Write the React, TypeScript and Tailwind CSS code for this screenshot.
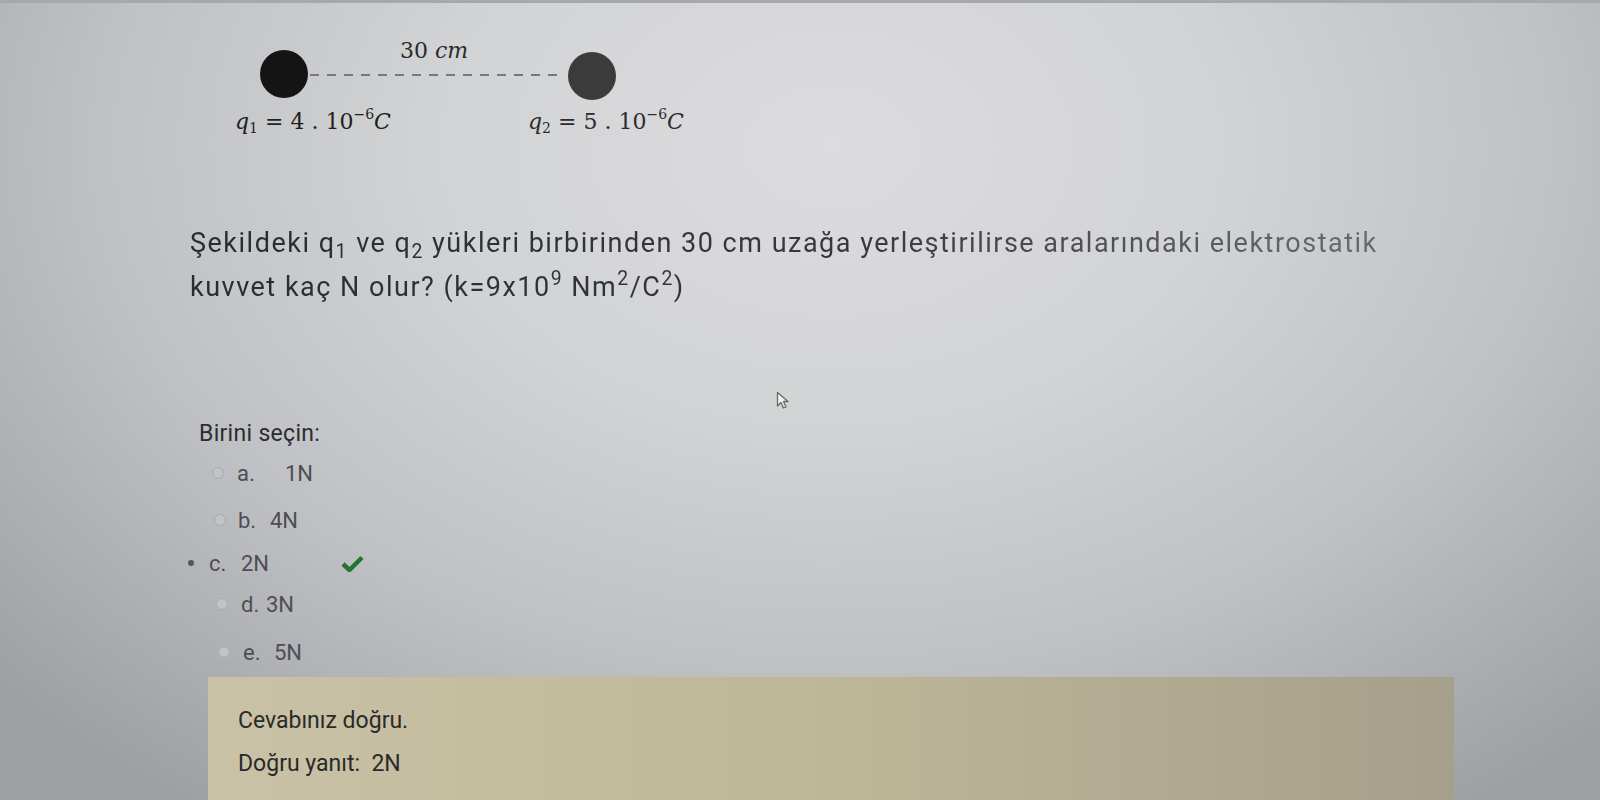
import React from "react";

const options = [
  { key: "a", value: "1N", row: "mt-[12px] ml-[212px]", letter: "w-[48px]", gap: "ml-[13px]", selected: false },
  { key: "b", value: "4N", row: "mt-[19px] ml-[214px]", letter: "w-[32px]", gap: "ml-[12px]", selected: false },
  { key: "c", value: "2N", row: "mt-[15px] ml-[185px]", letter: "w-[32px]", gap: "ml-[12px]", selected: true },
  { key: "d", value: "3N", row: "mt-[13px] ml-[216px]", letter: "w-[25px]", gap: "ml-[13px]", selected: false },
  { key: "e", value: "5N", row: "mt-[20px] ml-[218px]", letter: "w-[31px]", gap: "ml-[13px]", selected: false },
];

const Figure = () => (
  <svg width="520" height="150" className="block ml-[200px]">
    <text x="200" y="55" fontFamily="DejaVu Serif" fontSize="22" fill="#2a2a2c">
      30 <tspan fontStyle="italic">cm</tspan>
    </text>
    <line x1="110" y1="72" x2="360" y2="72" stroke="#77787c" strokeWidth="2" strokeDasharray="9 8" />
    <circle cx="84" cy="71" r="24" fill="#141414" />
    <circle cx="392" cy="73" r="24" fill="#3b3b3c" />
    <text x="35" y="126" fontFamily="DejaVu Serif" fontSize="22" fill="#1f1f21">
      <tspan fontStyle="italic">q</tspan>
      <tspan fontSize="14" dy="4">1</tspan>
      <tspan dy="-4"> = 4 . 10</tspan>
      <tspan fontSize="14" dy="-10">−6</tspan>
      <tspan dy="10" fontStyle="italic">C</tspan>
    </text>
    <text x="328" y="126" fontFamily="DejaVu Serif" fontSize="22" fill="#2c2c2f">
      <tspan fontStyle="italic">q</tspan>
      <tspan fontSize="14" dy="4">2</tspan>
      <tspan dy="-4"> = 5 . 10</tspan>
      <tspan fontSize="14" dy="-10">−6</tspan>
      <tspan dy="10" fontStyle="italic">C</tspan>
    </text>
  </svg>
);

const Radio = ({ selected }: { selected: boolean }) =>
  selected ? (
    <span className="flex h-[12px] w-[12px] items-center justify-center rounded-full bg-[#b4b5b8]">
      <span className="h-[6px] w-[6px] rounded-full bg-[#55565a]" />
    </span>
  ) : (
    <span className="h-[12px] w-[12px] rounded-full border border-[#a9aaad] bg-[#c2c3c5]" />
  );

export default function App() {
  return (
    <div
      className="relative h-[800px] w-full overflow-hidden border-t-[3px] border-[#a7a8ac] bg-[radial-gradient(ellipse_70%_100%_at_52%_18%,#dcdcdf_0%,#d2d3d5_35%,#c0c1c4_65%,#9fa0a4_100%)]"
      style={{ fontFamily: "Roboto, 'Noto Sans', sans-serif" }}
    >
      <Figure />

      <p className="mt-[68px] ml-[190px] w-fit whitespace-nowrap bg-[linear-gradient(90deg,#2a2b2f,#37383d_55%,#6a6b70)] bg-clip-text text-[27px] leading-[44px] tracking-[1.5px] text-transparent">
        Şekildeki q<span className="align-[-0.3em] text-[0.72em] leading-none">1</span> ve q
        <span className="align-[-0.3em] text-[0.72em] leading-none">2</span> yükleri birbirinden 30 cm uzağa
        yerleştirilirse aralarındaki elektrostatik
        <br />
        kuvvet kaç N olur? (k=9x10<span className="align-[0.55em] text-[0.72em] leading-none">9</span> Nm
        <span className="align-[0.55em] text-[0.72em] leading-none">2</span>/C
        <span className="align-[0.55em] text-[0.72em] leading-none">2</span>)
      </p>

      <div className="mt-[112px] ml-[199px] text-[23px] leading-[26px] tracking-[0.3px] text-[#2c2d31]">Birini seçin:</div>

      {options.map((o) => (
        <div key={o.key} className={`flex h-[28px] items-center text-[22px] text-[#4d4e53] ${o.row}`}>
          <Radio selected={o.selected} />
          <span className={`${o.gap} ${o.letter}`}>{o.key}.</span>
          <span>{o.value}</span>
          {o.selected && (
            <svg width="23" height="17" viewBox="0 0 23 17" className="ml-[72px]">
              <path d="M2 9 L8.5 15 L21 2.5" fill="none" stroke="#267434" strokeWidth="4.5" strokeLinejoin="round" />
            </svg>
          )}
        </div>
      ))}

      <div className="mt-[11px] ml-[208px] h-[140px] w-[1246px] bg-[linear-gradient(90deg,#c9c2a6,#bdb698_50%,#a6a08b)] pt-[30px] pl-[30px] text-[23px] leading-[28px] text-[#2a2a2a]">
        <div>Cevabınız doğru.</div>
        <div className="mt-[15px]">Doğru yanıt:&nbsp;&nbsp;2N</div>
      </div>

      <svg width="14" height="20" viewBox="0 0 14 20" className="absolute left-[776px] top-[388px]">
        <path d="M1.5 1.5 L1.5 15 L5 11.5 L7.5 17 L10 16 L7.5 10.5 L12 10.5 Z" fill="#f2f2f2" stroke="#66705c" strokeWidth="1.3" strokeLinejoin="round" />
      </svg>
    </div>
  );
}
